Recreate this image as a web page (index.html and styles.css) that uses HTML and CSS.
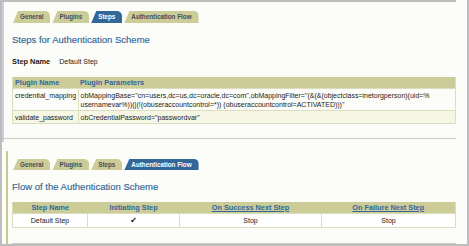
FILE: index.html
```html
<!DOCTYPE html>
<html lang="en">

<head>
  <meta charset="UTF-8">
  <meta name="viewport" content="width=device-width, initial-scale=1.0">
  <title>Authentication Scheme Steps</title>

  <link rel="stylesheet" href="styles.css">
</head>

<body>
  <div class="frame">

    <div class="panel panel-steps">
      <div class="panel-body">
        <div class="tabs">
          <span class="tab">General</span>
          <span class="tab">Plugins</span>
          <span class="tab active">Steps</span>
          <span class="tab">Authentication Flow</span>
        </div>

        <h2 class="heading">Steps for Authentication Scheme</h2>

        <div class="field">
          <span class="field-label">Step Name</span>
          <span>Default Step</span>
        </div>

        <table class="grid plugins-grid">
          <tr>
            <th class="name-col">Plugin Name</th>
            <th>Plugin Parameters</th>
          </tr>
          <tr>
            <td>credential_mapping</td>
            <td>obMappingBase="cn=users,dc=us,dc=oracle,dc=com",obMappingFilter="(&amp;(&amp;(objectclass=inetorgperson)(uid=%<wbr>usernamevar%))(|(!(obuseraccountcontrol=*)) (obuseraccountcontrol=ACTIVATED)))"</td>
          </tr>
          <tr class="band">
            <td>validate_password</td>
            <td>obCredentialPassword="passwordvar"</td>
          </tr>
        </table>
      </div>
    </div>

    <div class="panel panel-flow">
      <div class="panel-body">
        <div class="tabs tabs-small">
          <span class="tab">General</span>
          <span class="tab">Plugins</span>
          <span class="tab">Steps</span>
          <span class="tab active">Authentication Flow</span>
        </div>

        <h2 class="heading">Flow of the Authentication Scheme</h2>

        <table class="grid flow-grid">
          <colgroup>
            <col style="width: 75px">
            <col style="width: 92px">
            <col style="width: 142px">
            <col>
          </colgroup>
          <tr>
            <th>Step Name</th>
            <th>Initiating Step</th>
            <th><a href="#">On Success Next Step</a></th>
            <th><a href="#">On Failure Next Step</a></th>
          </tr>
          <tr>
            <td>Default Step</td>
            <td class="check">&#10004;</td>
            <td>Stop</td>
            <td>Stop</td>
          </tr>
        </table>
      </div>
    </div>

  </div>
</body>
</html>
```

FILE: styles.css
```css
body {
  margin: 0;
  background-color: #fcfdf8;
  font-family: 'Liberation Sans', Arial, sans-serif;
  font-size: 7px;
  color: #1a1a1a;
}

.frame {
  width: 469px;
  height: 246px;
  box-sizing: border-box;
  border: 2px solid #bdbdbd;
  border-top: none;
}

.panel-steps {
  border-left: 2px solid #cfcbd8;
  padding: 0 11px 3px 8px;
}

.panel-steps .panel-body {
  border-top: 2px solid #bdbdbd;
  margin-left: -10px;
  padding-left: 10px;
}

.panel-flow {
  margin: 9px 0 0 4px;
  border-left: 2px solid #c9c98f;
  padding: 0 11px 0 4px;
}

.panel-body {
  border-bottom: 1px solid #cbcbc3;
  padding-bottom: 14px;
}

.panel-steps .panel-body {
  padding-top: 9px;
}

.panel-flow .panel-body {
  padding-top: 8px;
  padding-bottom: 15px;
}

.tabs {
  display: flex;
  gap: 2px;
  margin-left: 1px;
}

.tab {
  height: 12px;
  line-height: 12px;
  padding: 0 7px;
  background-color: #cccc99;
  color: #454d57;
  font-size: 6.3px;
  font-weight: bold;
  border-top-right-radius: 5px;
  clip-path: polygon(0 100%, 5px 0, 100% 0, 100% 100%);
}

.tab.active {
  background-color: #336699;
  color: #fff;
}

.tabs-small .tab {
  height: 11px;
  line-height: 11px;
}

.heading {
  margin: 11px 0 0;
  font-size: 9.5px;
  line-height: 11px;
  font-weight: normal;
  color: #336699;
  -webkit-text-stroke: 0.15px #336699;
}

.panel-flow .heading {
  margin-top: 11px;
}

.field {
  display: flex;
  gap: 9px;
  margin-top: 12px;
  line-height: 9px;
}

.field-label {
  font-weight: bold;
  font-size: 7.4px;
}

.grid {
  width: 100%;
  border-collapse: collapse;
  table-layout: fixed;
  border-left: 1px solid #dcdcbf;
  border-right: 1px solid #dcdcbf;
}

.grid th {
  background-color: #cccc99;
  color: #336699;
  font-size: 7.3px;
  line-height: 9px;
  padding: 1px 2px;
  text-align: left;
}

.grid td {
  line-height: 9px;
  padding: 1.5px 2px;
  border: 1px solid #dcdcbf;
  vertical-align: top;
}

.plugins-grid {
  margin-top: 11px;
}

.plugins-grid .name-col {
  width: 61px;
}

.plugins-grid .band td {
  background-color: #f6f6e4;
}

.flow-grid {
  margin-top: 10px;
}

.flow-grid th,
.flow-grid td {
  text-align: center;
}

.flow-grid td {
  padding: 2px;
  background-color: #fff;
}

.flow-grid th a {
  color: #336699;
}

.check {
  font-family: 'DejaVu Sans', sans-serif;
  font-size: 8px;
}
```
